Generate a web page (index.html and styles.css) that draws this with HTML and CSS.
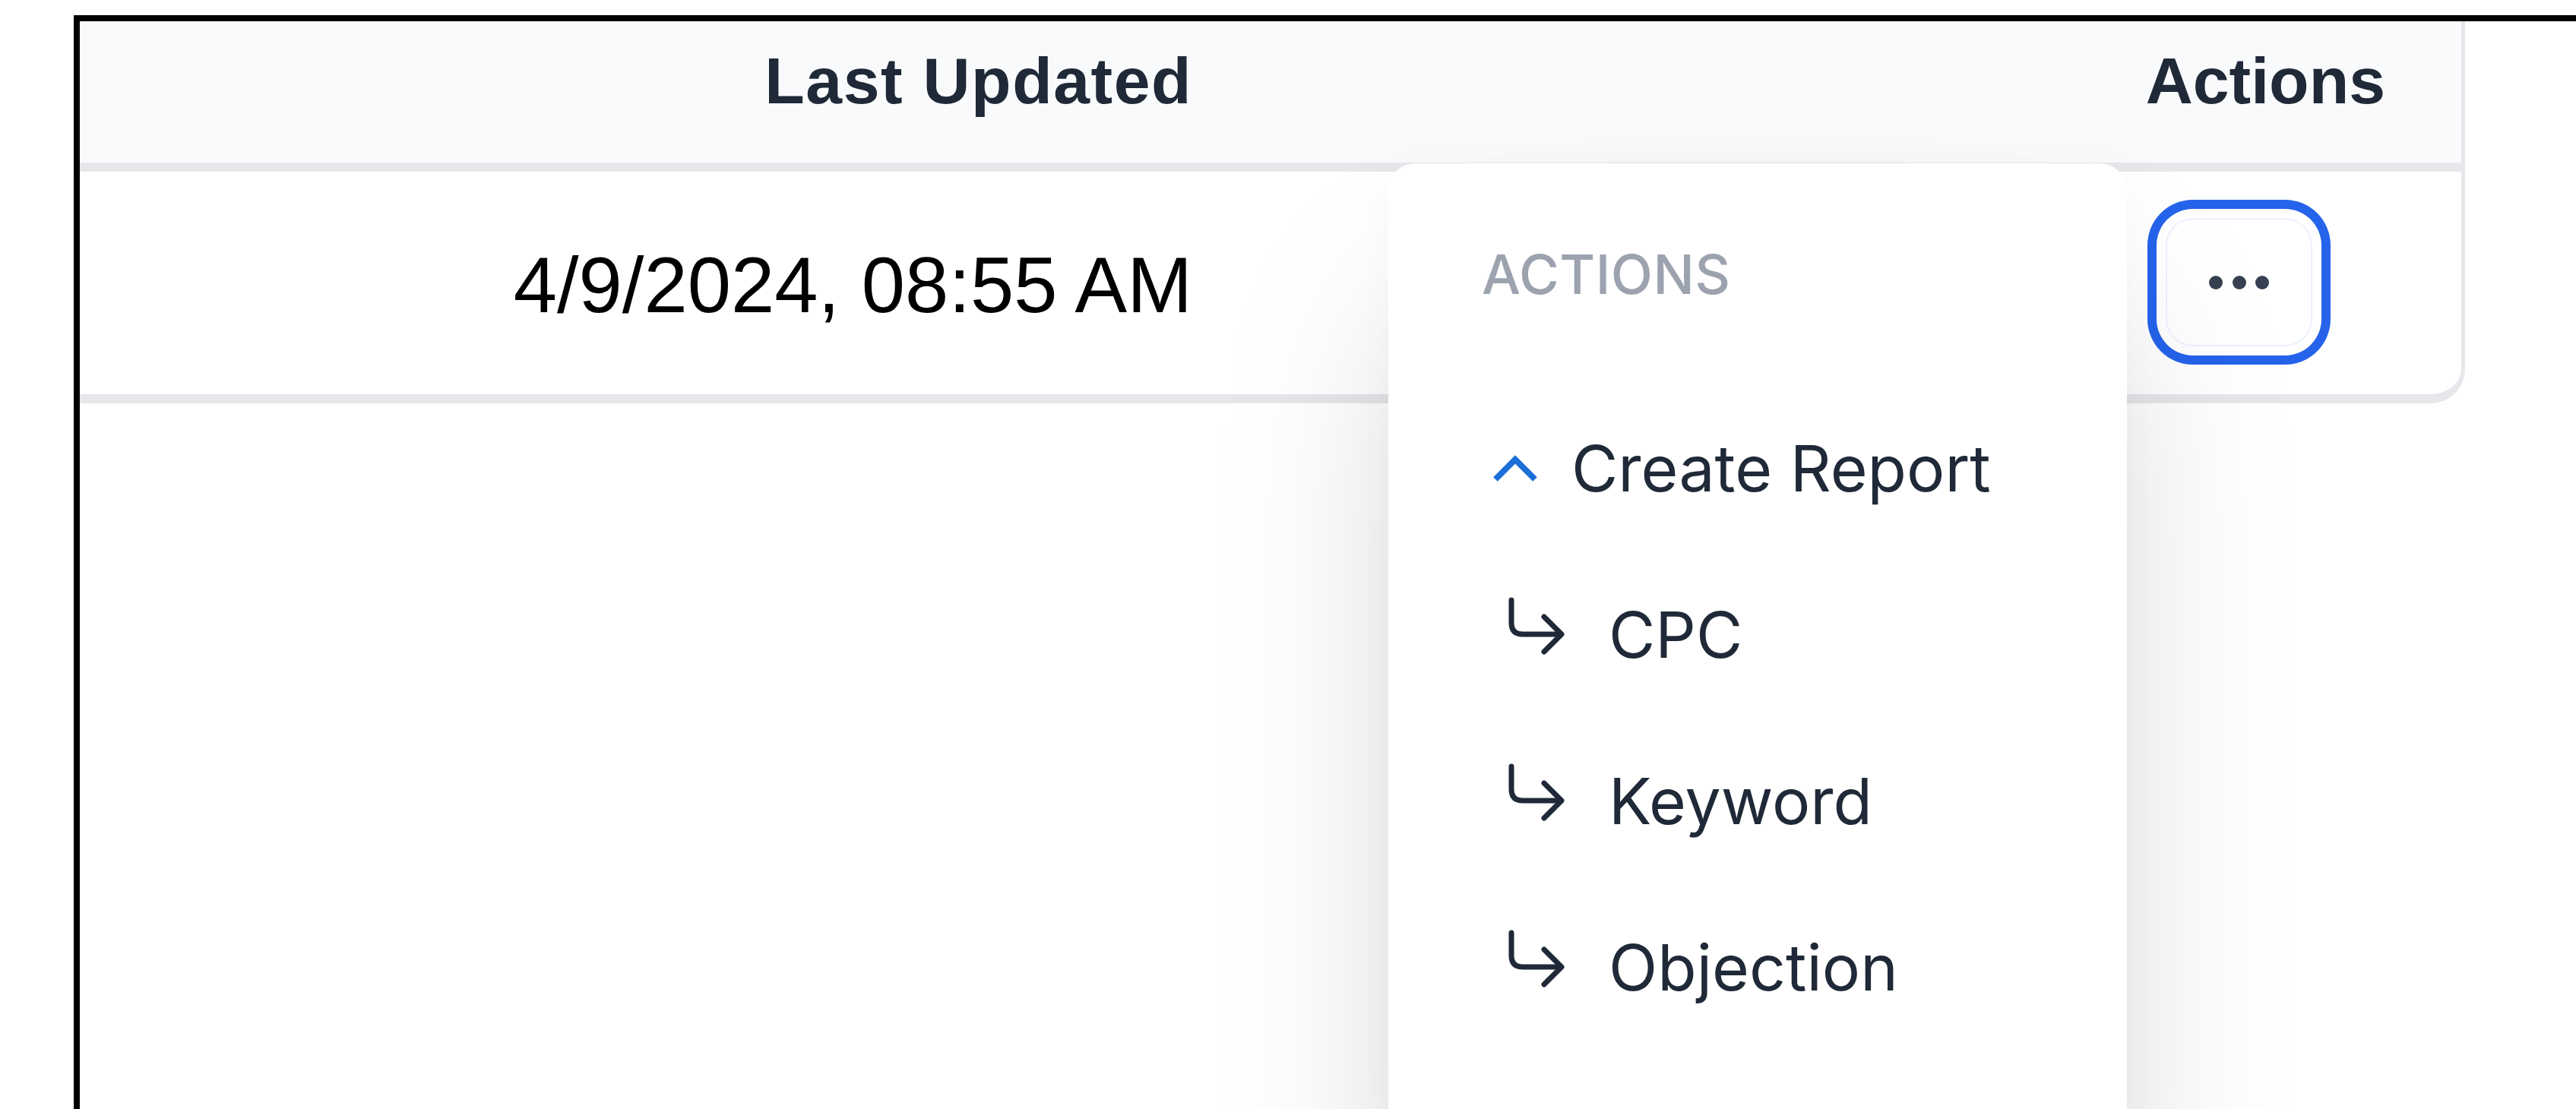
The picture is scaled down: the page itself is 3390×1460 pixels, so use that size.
FILE: index.html
```html
<!DOCTYPE html>
<html lang="en">
<head>
<meta charset="utf-8">
<title>Reports</title>
<link rel="stylesheet" href="styles.css">
</head>
<body>
<div class="frame">
  <div class="table">
    <div class="thead">
      <div class="th th-date">Last Updated</div>
      <div class="th">Actions</div>
    </div>
    <div class="tr">
      <div class="td td-date">4/9/2024, 08:55 AM</div>
      <div class="td td-actions">
        <button class="more-btn" aria-label="More actions">
          <svg class="dots" viewBox="0 0 80 20" width="80" height="20">
            <circle cx="9" cy="10" r="9"/>
            <circle cx="40" cy="10" r="9"/>
            <circle cx="70" cy="10" r="9"/>
          </svg>
        </button>
      </div>
    </div>

    <div class="menu" role="menu">
      <div class="menu-label">ACTIONS</div>
      <div class="menu-item menu-group">
        <svg class="chevron" viewBox="0 0 60 36" width="60" height="36">
          <polyline points="4,32 30,6 56,32"/>
        </svg>
        <span>Create Report</span>
      </div>
      <div class="menu-item menu-sub">
        <svg class="sub-arrow" viewBox="0 0 80 76" width="80" height="76">
          <path d="M7 4 V34 Q7 49 22 49 H72"/>
          <path d="M50 26 L73 49 L50 72"/>
        </svg>
        <span>CPC</span>
      </div>
      <div class="menu-item menu-sub">
        <svg class="sub-arrow" viewBox="0 0 80 76" width="80" height="76">
          <path d="M7 4 V34 Q7 49 22 49 H72"/>
          <path d="M50 26 L73 49 L50 72"/>
        </svg>
        <span>Keyword</span>
      </div>
      <div class="menu-item menu-sub">
        <svg class="sub-arrow" viewBox="0 0 80 76" width="80" height="76">
          <path d="M7 4 V34 Q7 49 22 49 H72"/>
          <path d="M50 26 L73 49 L50 72"/>
        </svg>
        <span>Objection</span>
      </div>
    </div>
  </div>
</div>
</body>
</html>
```

FILE: styles.css
```css
html, body {
  margin: 0;
  padding: 0;
  background: #ffffff;
  height: 100%;
  overflow: hidden;
}

body {
  font-family: "Liberation Sans", Arial, sans-serif;
}

/* outer black frame, open to the right and bottom */
.frame {
  margin: 20px 0 0 97px;
  border-top: 8px solid #000;
  border-left: 8px solid #000;
  height: 1500px;
}

/* table card */
.table {
  position: relative;
  box-sizing: border-box;
  width: 3139px;
  border-right: 5px solid #e5e7eb;
  border-bottom: 12px solid #e5e7eb;
  border-bottom-right-radius: 45px;
  background: #fff;
}

.thead,
.tr {
  display: grid;
  grid-template-columns: 1558px 1fr;
}

.thead {
  background: #f9fafb;
  border-bottom: 12px solid #e5e7eb;
}

.th {
  box-sizing: border-box;
  height: 186px;
  padding: 35px 100px 0 0;
  text-align: right;
  font-weight: 700;
  font-size: 86px;
  line-height: 86px;
  color: #1f2937;
}

.th-date {
  padding-right: 94px;
  letter-spacing: 1.5px;
}

.td {
  box-sizing: border-box;
  height: 293px;
  display: flex;
  align-items: center;
}

.td-date {
  justify-content: flex-end;
  padding: 5px 94px 0 0;
  font-size: 103px;
  line-height: 103px;
  color: #000;
}

.td-actions {
  justify-content: flex-end;
  padding-right: 196px;
}

/* kebab button with focus ring */
.more-btn {
  box-sizing: border-box;
  width: 193px;
  height: 169px;
  margin-top: -2px;
  border-radius: 36px;
  border: 2px solid rgba(59, 130, 246, 0.1);
  background: #fff;
  box-shadow: 0 0 0 12px #fff, 0 0 0 24px #2563eb;
  display: flex;
  align-items: center;
  justify-content: center;
  padding: 0;
}

.dots {
  display: block;
  fill: #374151;
}

/* dropdown menu */
.menu {
  position: absolute;
  left: 1722px;
  top: 187px;
  width: 972px;
  height: 1400px;
  background: #fff;
  border-radius: 36px;
  box-shadow: 0 150px 300px -72px rgba(0, 0, 0, 0.25),
              0 0 60px rgba(0, 0, 0, 0.02);
  font-family: Inter, "Noto Sans", sans-serif;
  z-index: 2;
}

.menu-label {
  padding: 110px 0 110px 123px;
  font-size: 72px;
  line-height: 72px;
  font-weight: 500;
  letter-spacing: 0.5px;
  color: #9ca3af;
}

.menu-item {
  height: 219px;
  display: flex;
  align-items: center;
  font-size: 84px;
  line-height: 84px;
  color: #1f2937;
}

.menu-group {
  padding-left: 137px;
}

.menu-group span {
  margin-left: 44px;
}

.chevron {
  display: block;
  fill: none;
  stroke: #1d6fd8;
  stroke-width: 8;
  stroke-linecap: butt;
  stroke-linejoin: miter;
}

.menu-sub {
  padding-left: 1px;
}

.sub-arrow {
  display: block;
  margin-left: 154px;
  margin-bottom: 24px;
  fill: none;
  stroke: #1f2937;
  stroke-width: 7;
  stroke-linecap: round;
  stroke-linejoin: round;
}

.menu-sub span {
  margin-left: 55px;
}
```
